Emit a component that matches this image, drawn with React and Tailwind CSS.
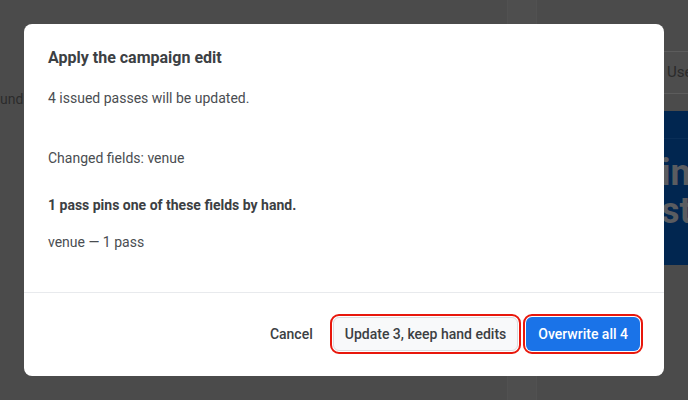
import { useState } from 'react'

// page behind the dialog, already dimmed by the overlay
function BackdropPage() {
  return (
    <div className="flex h-[400px] w-[688px] overflow-hidden bg-[#4b4b4b] text-[#2b2b2b]">
      <div className="flex w-[507px] shrink-0 flex-col">
        <p className="mt-[89px] text-[14px] leading-5">und</p>
      </div>
      <div className="w-[30px] shrink-0 border-x border-[#515151] bg-[#4e4e4e]" />
      <div className="flex flex-1 flex-col pl-[126px]">
        <div className="mt-[51px] flex h-[43px] items-center border-y border-[#5c5c5c] bg-[#4d4d4d] pl-[4px] text-[15px] text-[#2a2a2a]">
          User
        </div>
        <div className="mt-[17px] h-[154px] bg-[#012650]">
          <div className="h-[28px] border-b border-[#0a2e57]" />
          <div className="-ml-[2px] pt-[15px] text-[36px] font-bold leading-[38px] text-[#5a5c60]">
            <div>in</div>
            <div>st</div>
          </div>
        </div>
      </div>
    </div>
  )
}

export default function App() {
  const [open, setOpen] = useState(true)

  return (
    <div className="relative h-[400px] w-[688px] overflow-hidden font-['Roboto',sans-serif]">
      <BackdropPage />

      {open && (
        <div className="absolute inset-0 flex items-start justify-center pt-6">
          <div className="flex h-[352px] w-[640px] flex-col rounded-lg bg-white">
            <div className="flex-1 px-6 pt-6">
              <h2 className="text-[16px] font-bold leading-5 text-[#3c4043]">Apply the campaign edit</h2>
              <p className="mt-[20px] text-[14px] leading-5 text-[#4a4d51]">4 issued passes will be updated.</p>
              <p className="mt-[40px] text-[14px] leading-5 text-[#4a4d51]">Changed fields: venue</p>
              <p className="mt-[27px] text-[14px] font-bold leading-5 text-[#3c4043]">
                1 pass pins one of these fields by hand.
              </p>
              <p className="mt-[17px] text-[14px] leading-5 text-[#4a4d51]">venue — 1 pass</p>
            </div>

            <div className="flex items-center justify-end gap-2 border-t border-[#e8eaed] px-6 pb-[25px] pt-[24px]">
              <button
                onClick={() => setOpen(false)}
                className="h-[34px] rounded-md px-3 text-[14px] font-medium text-[#3c4043]"
              >
                Cancel
              </button>
              <button className="h-[34px] rounded-md border border-[#dadce0] bg-[#f8f9fa] px-[11px] text-[14px] font-medium text-[#3c4043] outline-2 outline-offset-1 outline-[#e8170c]">
                Update 3, keep hand edits
              </button>
              <button className="h-[34px] rounded-md bg-[#1a73e8] px-3 text-[14px] font-medium text-white outline-2 outline-offset-1 outline-[#e8170c]">
                Overwrite all 4
              </button>
            </div>
          </div>
        </div>
      )}
    </div>
  )
}
